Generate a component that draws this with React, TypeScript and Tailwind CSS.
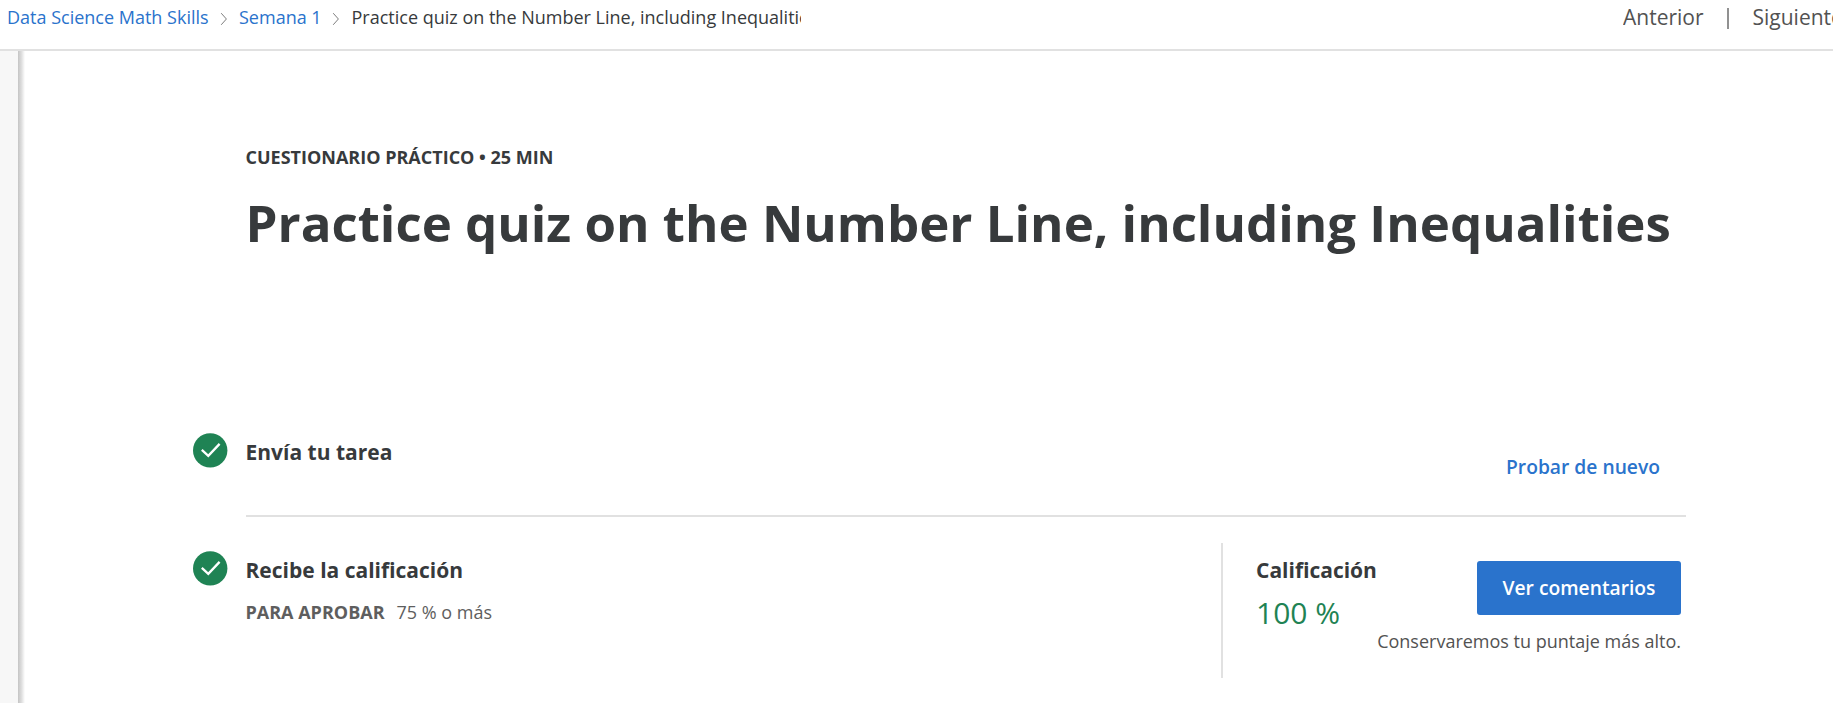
function CheckBadge() {
  return (
    <svg viewBox="0 0 35 35" className="block size-[35px] shrink-0" aria-hidden="true">
      <circle cx="17.2" cy="17.4" r="17.2" fill="#1f8354" />
      <path d="M8.8 16.9L15.3 22.9L26.6 10.9" fill="none" stroke="#fff" strokeWidth="2.3" />
    </svg>
  );
}

function Chevron() {
  return (
    <svg viewBox="0 0 8 12" className="mt-[13px] block h-3 w-2 shrink-0" aria-hidden="true">
      <path d="M1.2 0.2L6.4 6L1.2 11.8" fill="none" stroke="#7c7c7c" strokeWidth="1" />
    </svg>
  );
}

function Header() {
  return (
    <header className="flex h-[51px] shrink-0 justify-between border-b-2 border-[#e1e1e1]">
      <nav className="flex w-[801px] overflow-hidden whitespace-nowrap pl-[7px] text-[18px] leading-[34px]">
        <a className="w-[202px] shrink-0 text-[#2a73cc]">Data Science Math Skills</a>
        <div className="w-[30px] shrink-0 pl-[11px]"><Chevron /></div>
        <a className="w-[82px] shrink-0 text-[#2a73cc]">Semana 1</a>
        <div className="w-[30.5px] shrink-0 pl-[11px]"><Chevron /></div>
        <span className="shrink-0 text-[#373a3c]">Practice quiz on the Number Line, including Inequalities</span>
      </nav>
      <div className="flex w-[210px] overflow-hidden whitespace-nowrap text-[21px] leading-[34px] text-[#525252]">
        <a className="w-[104px] shrink-0">Anterior</a>
        <div className="mt-2 h-[21px] w-[2px] shrink-0 bg-[#919191]" />
        <a className="ml-[23.5px] shrink-0">Siguiente</a>
      </div>
    </header>
  );
}

export default function App() {
  return (
    <div className="flex h-[703px] w-[1833px] flex-col overflow-hidden bg-white font-['Open_Sans',sans-serif] text-[#373a3c]">
      <Header />
      <div className="flex min-h-0 flex-1">
        <aside className="w-[18px] shrink-0 bg-[#f7f7f7]" />
        <div className="w-[7px] shrink-0 bg-linear-to-r from-[#c4c4c4] via-[#dedede] to-white" />
        <main className="flex w-[1661px] flex-col pl-[168px]">
          <div className="pl-[52.5px]">
            <p className="mt-[90px] h-8 whitespace-nowrap text-[18px] leading-8 font-bold">CUESTIONARIO PRÁCTICO • 25 MIN</p>
            <h1 className="mt-[19px] h-[60px] whitespace-nowrap text-[51px] leading-[60px] font-bold">Practice quiz on the Number Line, including Inequalities</h1>
          </div>
          <section className="mt-[181px] flex h-[84px]">
            <CheckBadge />
            <div className="ml-[18px] flex flex-1 justify-between border-b-2 border-[#e1e1e1]">
              <h2 className="-ml-[0.5px] mt-[3px] text-[21px] leading-8 font-bold">Envía tu tarea</h2>
              <a className="mt-[18px] mr-[26px] text-[19.25px] leading-8 font-semibold text-[#2a73cc]">Probar de nuevo</a>
            </div>
          </section>
          <section className="flex h-[186px] pt-[26px]">
            <div className="flex w-[1028px] pt-[8px]">
              <CheckBadge />
              <div className="ml-[17.5px]">
                <h2 className="mt-[3px] text-[21px] leading-8 font-bold">Recibe la calificación</h2>
                <p className="mt-[10px] flex whitespace-nowrap text-[18px] leading-8 text-[#5e5e5e]">
                  <strong className="w-[151px] font-bold">PARA APROBAR</strong>
                  <span>75 % o más</span>
                </p>
              </div>
            </div>
            <div className="relative flex h-[135px] w-[460px] border-l-2 border-[#e1e1e1] pl-[33px]">
              <div className="pt-[11px]">
                <h2 className="text-[21px] leading-8 font-bold">Calificación</h2>
                <p className="mt-[9px] whitespace-nowrap text-[30px] leading-9 text-[#1f8354]">100 %</p>
              </div>
              <div className="absolute top-[18px] right-0 flex flex-col items-end">
                <button className="h-[54px] w-[204px] rounded-[3px] bg-[#2a73cc] text-[19.25px] leading-[54px] font-semibold whitespace-nowrap text-white">Ver comentarios</button>
                <p className="mt-[10px] text-[18px] leading-8 whitespace-nowrap text-[#525252]">Conservaremos tu puntaje más alto.</p>
              </div>
            </div>
          </section>
        </main>
      </div>
    </div>
  );
}
